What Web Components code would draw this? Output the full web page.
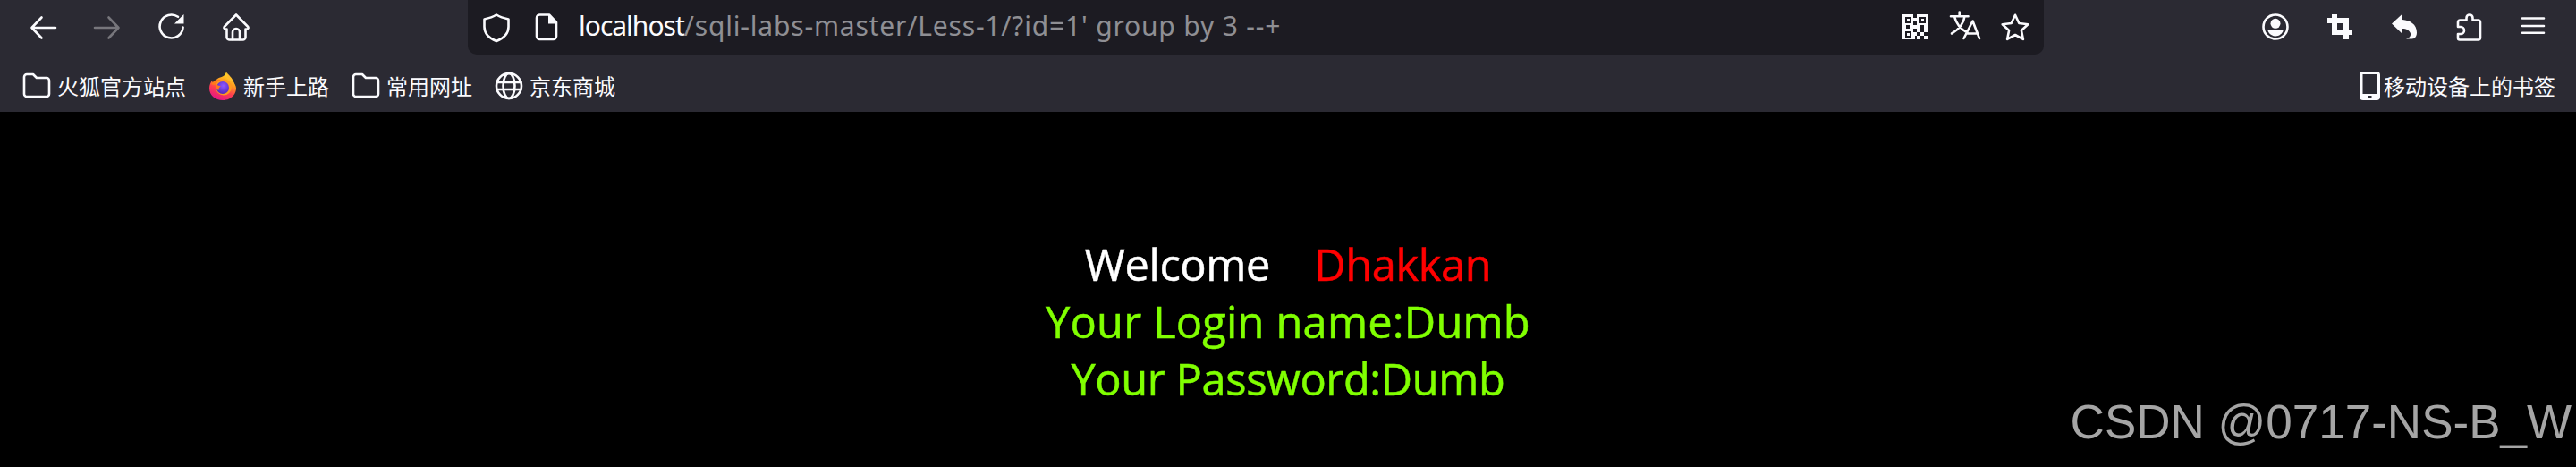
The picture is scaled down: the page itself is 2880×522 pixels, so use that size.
<!DOCTYPE html>
<html lang="zh"><head><meta charset="utf-8"><title>Less-1</title>
<style>
html,body{margin:0;padding:0;background:#000}
body{width:2880px;height:522px;overflow:hidden;position:relative}
</style></head><body>
<browser-window>
  <nav-bar slot="chrome"></nav-bar>
  <bookmark-bar slot="chrome"></bookmark-bar>
  <login-page></login-page>
  <water-mark>CSDN @0717-NS-B_W</water-mark>
</browser-window>
<script>
const S='fill="none" stroke="currentColor" stroke-width="2.6" stroke-linecap="round" stroke-linejoin="round"';
const F='fill="currentColor"';
const ICONS={
back:`<path ${S} stroke-width="3" d="M30 16H3.500M14.500 4.500 3.500 16l11 11.500"/>`,
forward:`<path ${S} stroke-width="3" d="M2 16h26.500M17.500 4.500 28.500 16l-11 11.500"/>`,
reload:`<path ${S} d="M23 3.800A13 13 0 1 0 28.600 15.500"/><path ${F} d="M29.500 1v10.500H19z"/>`,
home:`<path ${S} d="M16 1.500 3.200 14.500c-1.500 1.500-.5 3 1 3h1.300V26.500A3 3 0 0 0 8.500 29.500h15a3 3 0 0 0 3-3V17.500h1.300c1.500 0 2.500-1.500 1-3z"/><path ${S} d="M12 29v-8a4 4 0 0 1 8 0v8"/>`,
shield:`<path ${S} d="M16 1.500C12 4 7 5.500 2.500 6.500V15c0 7.500 6 13 13.500 16 7.500-3 13.500-8.500 13.500-16V6.500C25 5.500 20 4 16 1.500z"/>`,
doc:`<path ${S} d="M9 1.500h10l8 8.500v15.500a3.500 3.500 0 0 1-3.500 3.500H8.500A3.500 3.500 0 0 1 5 25.500V5a3.500 3.500 0 0 1 4-3.500z"/><path ${F} d="M18 1.500h1.500l8 8.500v1.500H18z"/>`,
qr:`<g ${F} shape-rendering="crispEdges"><path fill-rule="evenodd" d="M2 1h12v12H2zM4.500 3.500v7h7v-7zM18 1h12v12H18zM20.500 3.500v7h7v-7zM2 17h12v12H2zM4.500 19.500v7h7v-7z"/><rect x="6.500" y="5.500" width="3" height="3"/><rect x="22.500" y="5.500" width="3" height="3"/><rect x="6.500" y="21.500" width="3" height="3"/><rect x="14" y="5" width="4" height="4"/><rect x="14" y="13" width="4" height="4"/><rect x="18" y="13" width="4" height="4"/><rect x="26" y="13" width="4" height="4"/><rect x="2" y="13" width="4" height="4"/><rect x="10" y="13" width="4" height="4"/><rect x="18" y="17" width="4" height="4"/><rect x="22" y="21" width="4" height="4"/><rect x="14" y="21" width="4" height="4"/><rect x="26" y="17" width="4" height="4"/><rect x="18" y="25" width="4" height="4"/><rect x="26" y="25" width="4" height="4"/><rect x="14" y="25" width="2" height="4"/></g>`,
translate:`<path ${S} stroke-linecap="butt" stroke-linejoin="miter" stroke-width="3" d="M0 3.200h19.500M9.700-1.500v4.700M4 3.200C6 12 12 18 18.500 21.500M15.500 3.200C14.500 11 9 18 1 22.500M14.500 28 24.500 8.500 32 28M17.500 22.500h12"/>`,
star:`<path ${S} d="M16 1.800l4.300 9.200 10 1.200-7.400 6.800 2 9.900L16 24l-8.900 4.900 2-9.900L1.700 12.200l10-1.200z"/>`,
profile:`<circle ${S} cx="16" cy="15" r="13.500"/><circle ${F} cx="16" cy="11.300" r="5.500"/><path ${F} d="M7.300 18.800h17.400c-1 4-4.700 6.700-8.700 6.700s-7.700-2.700-8.700-6.700z"/>`,
crop:`<path ${F} shape-rendering="crispEdges" fill-rule="evenodd" d="M7 .5h6v4.500h13v13.500h4v5.500h-4v4.500h-6v-4.500H7V11H2V5h5zM13 11v7.500h7V11z"/>`,
undo:`<path ${F} d="M2 11.500 14 .5v6.500c8 .5 16 5 16 14.500 0 3-1 5-3 6.500-3 .8-6 .5-9 .5 3.500-1 5.500-3 5-6-.8-3.500-5-5.500-9-5.500v6z"/>`,
ext:`<path ${S} d="M13.500 7.500V5a3.500 3.500 0 0 1 7 0v2.500h6A2.500 2.500 0 0 1 29 10v17a2.500 2.500 0 0 1-2.500 2.500H6A2 2 0 0 1 4 27.500V23h3a4 4 0 0 0 0-8H4v-5a2.500 2.500 0 0 1 2.500-2.500z"/>`,
menu:`<path ${S} stroke-linecap="butt" d="M4 5.500h24M4 14h24M4 21.700h24"/>`,
folder:`<path ${S} d="M5 3h7l4 4h11a3 3 0 0 1 3 3v15a3 3 0 0 1-3 3H5a3 3 0 0 1-3-3V6a3 3 0 0 1 3-3z"/>`,
globe:`<circle ${S} cx="16" cy="19" r="14"/><ellipse ${S} cx="16" cy="19" rx="6.500" ry="14"/><path ${S} d="M2.500 15h27M2.500 23h27"/>`,
phone:`<rect ${F} x="4" y="2" width="23" height="32" rx="4"/><rect fill="#2b2a33" x="7.500" y="5" width="16" height="22"/><rect fill="#2b2a33" x="13.500" y="29" width="4" height="2.500"/>`,
firefox:`<defs><linearGradient id="b" x1=".75" y1=".05" x2=".35" y2="1"><stop offset="0" stop-color="#ffe226"/><stop offset=".35" stop-color="#ff9a20"/><stop offset=".65" stop-color="#ff3f4e"/><stop offset="1" stop-color="#e31587"/></linearGradient><radialGradient id="g" cx=".55" cy=".35" r=".75"><stop offset="0" stop-color="#9059ff"/><stop offset="1" stop-color="#4a20b0"/></radialGradient></defs>
<path fill="url(#b)" d="M20 .5c1 3 3 5 5 7.500 4 4.500 6 8 6 10.500 0 7.500-6.500 13.500-15 13.500S1 26.500 1 18.500c0-3.500 1.500-6.500 3-8.500l1 3c1-2 2.500-3.500 4.500-4.500C11.500 6 18 7 20 .5z"/>
<path fill="#ff7a1a" d="M3 14c2-3 5-5 9-5 3 0 4 .5 5 1.500-3 0-4.500 1-5.500 2.500l-2 1.500c-2 .5-4 .5-6.500-.5z"/>
<path fill="#ffbd2e" d="M20 .5c3 4 8 7 9 14-2-4-5-6-8-6.500 0-2 0-5-1-7.500z"/>
<circle fill="#ff9a20" cx="17" cy="17.500" r="9"/><circle fill="url(#g)" cx="16" cy="18" r="7"/>
<path fill="#ff7a1a" d="M8 13c1.500 2.500 3.500 3 6 3.500-2 1-3 2.500-2.500 4.500C9 20 7.500 16 8 13z"/>`
};
function def(name,css,html){
  customElements.define(name,class extends HTMLElement{
    constructor(){super();this.attachShadow({mode:'open'}).innerHTML=`<style>${css}</style>${html}`}
  });
}
customElements.define('ui-icon',class extends HTMLElement{
  connectedCallback(){
    if(this.shadowRoot)return;
    const n=this.getAttribute('name');
    const vb=n==='globe'?'0 2 32 34':n==='phone'?'4 2 23 32':'0 0 32 32';
    const r=this.attachShadow({mode:'open'});
    r.innerHTML=`<style>:host{display:block;flex:none;width:32px;height:32px;color:#fbfbfe}
    :host([dim]){color:#77767c}
    :host([name=globe]){height:34px}
    :host([name=phone]){width:23px}
    svg{display:block;width:100%;height:100%;overflow:visible}</style>
    <svg xmlns="http://www.w3.org/2000/svg" viewBox="${vb}">${ICONS[n]}</svg>`;
  }
});
def('browser-window',`:host{display:block;width:2880px;height:522px;background:#000;position:relative}
 .chrome{display:flex;flex-direction:column;height:125px;background:#2b2a33}`,
 `<div class="chrome"><slot name="chrome"></slot></div><slot></slot>`);
def('icon-group',`:host{display:flex;align-items:center;gap:var(--g,40px);flex:none}`,`<slot></slot>`);
def('url-bar',`:host{display:flex;align-items:center;box-sizing:border-box;width:1762px;height:61px;margin-left:243px;padding:0 16px;background:#1c1b22;border-radius:0 0 10px 10px;font:30px/40px "Noto Sans","Open Sans",sans-serif}
 .t{flex:1;margin:0 0 4px 20px;white-space:nowrap;color:#8f8f94;letter-spacing:.82px}
 b{font-weight:400;color:#fbfbfe;letter-spacing:-1px}`,
 `<slot name="lead"></slot><div class="t"><b>localhost</b>/sqli-labs-master/Less-1/?id=1' group by 3 --+</div><slot name="trail"></slot>`);
def('nav-bar',`:host{display:flex;align-items:center;height:61px;padding:0 32px;flex:none}
 .sp{flex:1}`,
 `<icon-group><ui-icon name="back"></ui-icon><ui-icon name="forward" dim></ui-icon><ui-icon name="reload"></ui-icon><ui-icon name="home"></ui-icon></icon-group>
 <url-bar><icon-group slot="lead" style="--g:24px"><ui-icon name="shield"></ui-icon><ui-icon name="doc"></ui-icon></icon-group>
 <icon-group slot="trail" style="--g:24px"><ui-icon name="qr"></ui-icon><ui-icon name="translate"></ui-icon><ui-icon name="star"></ui-icon></icon-group></url-bar>
 <div class="sp"></div>
 <icon-group><ui-icon name="profile"></ui-icon><ui-icon name="crop"></ui-icon><ui-icon name="undo"></ui-icon><ui-icon name="ext"></ui-icon><ui-icon name="menu"></ui-icon></icon-group>`);
customElements.define('book-mark',class extends HTMLElement{
  constructor(){super();const r=this.attachShadow({mode:'open'});
   r.innerHTML=`<style>:host{display:flex;align-items:center;gap:var(--g,7px);flex:none;font:24px/32px "Noto Sans CJK SC",sans-serif;color:#fbfbfe;white-space:nowrap}</style><ui-icon name="${this.getAttribute('icon')}"></ui-icon><slot></slot>`;}
});
def('bookmark-bar',`:host{display:flex;align-items:center;gap:25px;box-sizing:border-box;height:64px;padding:6px 23px 0 25px;flex:none}
 .r{margin-left:auto;--g:4px}`,
 `<book-mark icon="folder">火狐官方站点</book-mark><book-mark icon="firefox">新手上路</book-mark><book-mark icon="folder">常用网址</book-mark><book-mark icon="globe">京东商城</book-mark><book-mark class="r" icon="phone">移动设备上的书签</book-mark>`);
def('login-page',`:host{display:flex;flex-direction:column;align-items:center;padding-top:138px;font:48.800px/64px "Open Sans",sans-serif;color:#80ff00;white-space:nowrap;-webkit-text-stroke:.5px currentColor}
 .w{color:#fff} .d{color:#f00}
 .a{letter-spacing:-.4px} .b{letter-spacing:.18px}`,
 `<div class="a"><span class="w">Welcome&nbsp;&nbsp;&nbsp; </span><span class="d">Dhakkan</span></div><div class="b">Your Login name:Dumb</div><div class="a">Your Password:Dumb</div>`);
def('water-mark',`:host{position:absolute;right:5px;top:437px;font:53px/70px "Liberation Sans",Arial,sans-serif;color:#a5a5a5;white-space:nowrap}`,`<slot></slot>`);
</script>
</body></html>
